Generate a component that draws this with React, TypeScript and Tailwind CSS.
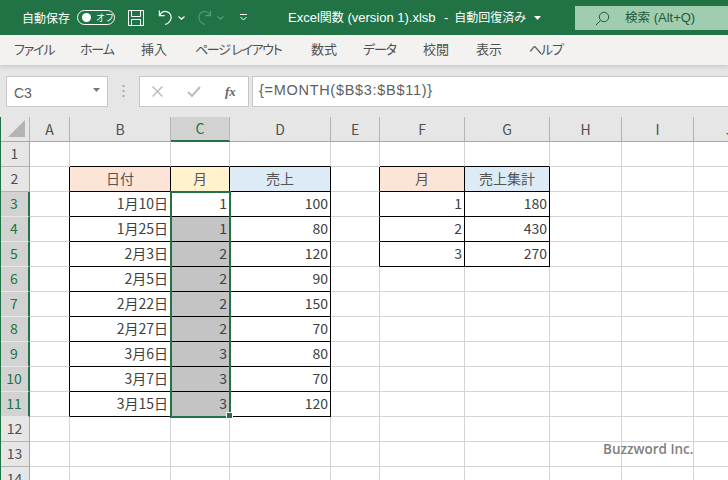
import React from "react";

const font = "font-['Noto_Sans_CJK_JP','Noto_Sans',sans-serif]";
const colW = [30, 40, 101, 59, 101, 49, 85, 85, 72, 72, 72];
const colN = ["", "A", "B", "C", "D", "E", "F", "G", "H", "I", "J"];

type Cell = { t: string; bg?: string; center?: boolean };
const rows: Record<number, Record<number, Cell>> = {
  2: {
    2: { t: "日付", bg: "bg-[#fce4d6]", center: true },
    3: { t: "月", bg: "bg-[#fff2cc]", center: true },
    4: { t: "売上", bg: "bg-[#ddebf7]", center: true },
    6: { t: "月", bg: "bg-[#fce4d6]", center: true },
    7: { t: "売上集計", bg: "bg-[#ddebf7]", center: true },
  },
};
const main: [string, string, string][] = [
  ["1月10日", "1", "100"],
  ["1月25日", "1", "80"],
  ["2月3日", "2", "120"],
  ["2月5日", "2", "90"],
  ["2月22日", "2", "150"],
  ["2月27日", "2", "70"],
  ["3月6日", "3", "80"],
  ["3月7日", "3", "70"],
  ["3月15日", "3", "120"],
];
main.forEach((r, i) => {
  const n = i + 3;
  rows[n] = {
    2: { t: r[0] },
    3: { t: r[1], bg: n === 3 ? undefined : "bg-[#c4c4c4]" },
    4: { t: r[2] },
  };
});
[["1", "180"], ["2", "430"], ["3", "270"]].forEach((r, i) => {
  rows[i + 3][6] = { t: r[0] };
  rows[i + 3][7] = { t: r[1] };
});

function blackRight(r: number, c: number) {
  if (r >= 2 && r <= 11 && c >= 1 && c <= 4) return true;
  if (r >= 2 && r <= 5 && c >= 5 && c <= 7) return true;
  return false;
}
function blackBottom(r: number, c: number) {
  if (r >= 1 && r <= 11 && c >= 2 && c <= 4) return true;
  if (r >= 1 && r <= 5 && c >= 6 && c <= 7) return true;
  return false;
}

const Sheet = () => {
  const nums = Array.from({ length: 14 }, (_, i) => i + 1);
  return (
    <div className="relative h-[363px] overflow-hidden bg-white border-l border-[#217346]">
      <div className="flex h-[25px] -ml-px bg-[#e6e6e6]">
        {colW.map((w, i) => (
          <div
            key={i}
            style={{ width: w }}
            className={`shrink-0 flex items-center justify-center text-[14px] relative border-r border-[#b4b4b4] ${
              i === 3
                ? "bg-[#d2d2d2] text-[#217346] border-b-2 border-b-[#217346]"
                : "text-[#505050] border-b border-b-[#a8a8a8]"
            }`}
          >
            {i === 0 ? (
              <svg className="absolute right-[4px] bottom-[4px]" width="17" height="17" viewBox="0 0 17 17">
                <path d="M17 0V17H0Z" fill="#b4b4b4" />
              </svg>
            ) : (
              colN[i]
            )}
          </div>
        ))}
      </div>
      {nums.map((r) => (
        <div key={r} className="flex h-[25px] -ml-px">
          {colW.map((w, c) => {
            const cell = rows[r]?.[c];
            if (c === 0) {
              const sel = r >= 3 && r <= 11;
              return (
                <div
                  key={c}
                  style={{ width: w }}
                  className={`shrink-0 flex items-center justify-center text-[14px] pb-[1px] border-b ${
                    sel
                      ? "bg-[#d2d2d2] text-[#217346] border-b-[#e6e6e6] border-r-2 border-r-[#217346]"
                      : "bg-[#e6e6e6] text-[#505050] border-b-[#b4b4b4] border-r border-r-[#a8a8a8]"
                  }`}
                >
                  {r}
                </div>
              );
            }
            return (
              <div
                key={c}
                style={{ width: w }}
                className={`shrink-0 flex items-center text-[14px] pb-[2px] whitespace-nowrap border-r border-b ${
                  cell?.center ? "text-[#555]" : "text-[#404040]"
                } ${blackRight(r, c) ? "border-r-black" : "border-r-[#d4d4d4]"} ${
                  blackBottom(r, c) ? "border-b-black" : "border-b-[#d4d4d4]"
                } ${cell?.bg ?? ""} ${cell?.center ? "justify-center" : "justify-end pr-[2px]"}`}
              >
                {cell?.t}
              </div>
            );
          })}
        </div>
      ))}
      {/* selection */}
      <div className="absolute left-[169px] top-[74px] w-[61px] h-[227px] border-2 border-[#217346]" />
      <div className="absolute left-[225px] top-[295px] w-[5px] h-[5px] bg-[#217346] border border-white box-content" />
      <div className="absolute left-[602px] top-[322px] text-[13.5px] font-semibold text-[#808080] font-['Open_Sans',sans-serif]">
        Buzzword Inc.
      </div>
    </div>
  );
};

export default function App() {
  const tabs: [string, number, string][] = [
    ["ファイル", 38, "tracking-[-1.2px]"],
    ["ホーム", 33, "tracking-[-1.2px]"],
    ["挿入", 26, ""],
    ["ページ レイアウト", 88, "tracking-[-1.3px]"],
    ["数式", 24, ""],
    ["データ", 32, "tracking-[-1.2px]"],
    ["校閲", 25, ""],
    ["表示", 25, ""],
    ["ヘルプ", 32, "tracking-[-1.2px]"],
  ];
  return (
    <div className={`w-[728px] h-[480px] overflow-hidden bg-[#e6e6e6] ${font}`}>
      {/* title bar */}
      <div className="h-[35px] bg-[#217346] flex items-center text-white text-[12px] whitespace-nowrap relative">
        <span className="ml-[22px] w-[50px] text-[12px] [font-feature-settings:'palt']">自動保存</span>
        <div className="ml-[5px] w-[38px] h-[15px] border border-white rounded-full flex items-center relative">
          <span className="ml-[4px] w-[9px] h-[9px] rounded-full bg-white" />
          <span className="ml-[5px] text-[9px] leading-none">オフ</span>
        </div>
        <svg className="ml-[13px]" width="16" height="16" viewBox="0 0 16 16" fill="none" stroke="#fff" strokeWidth="1">
          <path d="M.5.5H15.5V15.5H.5Z" />
          <path d="M3.5.5V6.5H12.5V.5M3.5 15.5V9.5H12.5V15.5" />
        </svg>
        <svg className="ml-[14px]" width="15" height="17" viewBox="0 0 16 17" fill="none" stroke="#fff" strokeWidth="1.3">
          <path d="M1.5 1V6.5H7" />
          <path d="M1.8 6C3.5 3 6 1.6 9 2.2C13.5 3.2 15.5 8 13 12C11.8 14 9.5 15.5 7.5 16" />
        </svg>
        <svg className="ml-[5px]" width="7" height="4" viewBox="0 0 7 4" fill="none" stroke="#fff" strokeWidth="1.2">
          <path d="M.5.5L3.5 3.2L6.5.5" />
        </svg>
        <svg className="ml-[12px]" width="15" height="17" viewBox="0 0 16 17" fill="none" stroke="#5a9a78" strokeWidth="1.2">
          <path d="M14.5 1V6.5H9" />
          <path d="M14.2 6C12.5 3 10 1.6 7 2.2C2.5 3.2 .5 8 3 12C4.2 14 6.5 15.5 8.5 16" />
        </svg>
        <svg className="ml-[5px]" width="7" height="4" viewBox="0 0 7 4" fill="none" stroke="#5a9a78" strokeWidth="1.2">
          <path d="M.5.5L3.5 3.2L6.5.5" />
        </svg>
        <svg className="ml-[16px]" width="7" height="7" viewBox="0 0 7 7" fill="none" stroke="#fff" strokeWidth="1">
          <path d="M0 .5H7M.5 3L3.5 6L6.5 3" />
        </svg>
        <span className="ml-[41px] w-[241px] text-[13px] font-['Liberation_Sans','Noto_Sans_CJK_JP',sans-serif] flex items-center">
          <span className="w-[148px] flex items-center">
            Excel<span className="text-[12px]">関数</span>&nbsp;(version 1).xlsb
          </span>
          <span className="ml-[8px]">-</span>
          <span className="ml-[6px] text-[12px]">自動回復済み</span>
        </span>
        <svg className="ml-[5px]" width="7" height="4" viewBox="0 0 7 4">
          <path d="M0 0H7L3.5 4Z" fill="#fff" />
        </svg>
        <div className="absolute left-[575px] top-[6px] w-[153px] h-[24px] bg-[#a0cdb0] flex items-center text-[#1f5a3a] text-[13px] font-['Liberation_Sans','Noto_Sans_CJK_JP',sans-serif]">
          <svg className="ml-[20px]" width="15" height="15" viewBox="0 0 15 15" fill="none" stroke="#1f5a3a" strokeWidth="1">
            <circle cx="9" cy="6" r="4.7" />
            <path d="M5.5 9.5L.8 14.2" />
          </svg>
          <span className="ml-[15px] flex items-center">
            <span className="text-[12.5px]">検索</span>&nbsp;(Alt+Q)
          </span>
        </div>
      </div>
      {/* tabs */}
      <div className="h-[30px] pb-[2px] bg-[#f3f2f1] flex items-center gap-[28px] pl-[14px] text-[13px] text-[#505050] whitespace-nowrap shadow-[0_2px_4px_rgba(0,0,0,0.12)] relative [font-feature-settings:'palt']">
        {tabs.map(([t, w, tr]) => (
          <span key={t} style={{ width: w }} className={`shrink-0 ${tr}`}>
            {t}
          </span>
        ))}
      </div>
      {/* formula bar */}
      <div className="h-[52px] pt-[11px] flex items-start">
        <div className="ml-[6px] w-[102px] h-[31px] bg-white border border-[#c8c8c8] flex items-center justify-between px-[7px] pt-[3px] text-[14px] text-[#606060] font-['Liberation_Sans',sans-serif]">
          <span>C3</span>
          <svg className="-mt-[6px]" width="7" height="4" viewBox="0 0 7 4">
            <path d="M0 0H7L3.5 4Z" fill="#777" />
          </svg>
        </div>
        <svg className="ml-[14px] mt-[9px]" width="3" height="12" viewBox="0 0 3 12" fill="#aaa">
          <rect x="0.5" y="0" width="2" height="2" />
          <rect x="0.5" y="5" width="2" height="2" />
          <rect x="0.5" y="10" width="2" height="2" />
        </svg>
        <div className="ml-[14px] w-[110px] h-[31px] bg-white border border-[#c8c8c8] flex items-center pl-[12px]">
          <svg width="11" height="11" viewBox="0 0 11 11" stroke="#bdbdbd" strokeWidth="1.5">
            <path d="M.5.5L10.5 10.5M10.5.5L.5 10.5" />
          </svg>
          <svg className="ml-[24px]" width="14" height="11" viewBox="0 0 14 11" fill="none" stroke="#bdbdbd" strokeWidth="2">
            <path d="M1 6L5 10L13 1" />
          </svg>
          <span className="ml-[24px] font-['Liberation_Serif',serif] italic font-bold text-[13px] text-[#666]">fx</span>
        </div>
        <div className="ml-[3px] flex-1 h-[31px] pb-[2px] bg-white border-y border-l border-[#c8c8c8] flex items-center pl-[6px] text-[14.5px] tracking-[0.7px] text-[#606060] font-['Liberation_Sans',sans-serif]">
          {"{=MONTH($B$3:$B$11)}"}
        </div>
      </div>
      <Sheet />
    </div>
  );
}
